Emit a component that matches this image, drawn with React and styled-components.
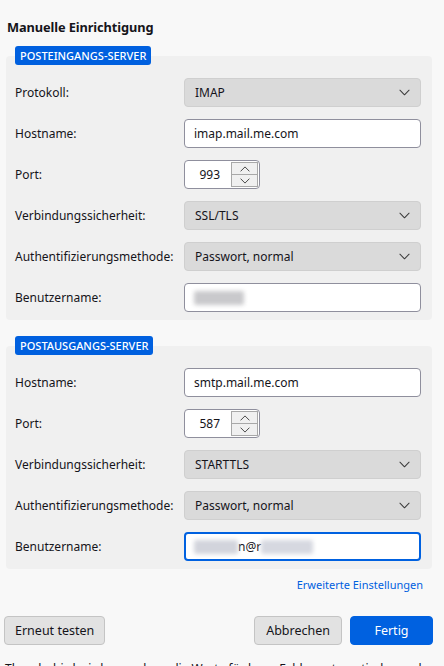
import React from "react";
import styled, { createGlobalStyle } from "styled-components";

const Global = createGlobalStyle`
  html, body { margin: 0; padding: 0; background: #f8f8f8; }
  body {
    font-family: "Noto Sans", "Open Sans", sans-serif;
    color: #15141a;
    overflow: hidden;
  }
`;

const Page = styled.div`
  width: 444px;
  height: 666px;
  box-sizing: border-box;
  padding: 18px 12px 0 6px;
  overflow: hidden;
`;

const Title = styled.h2`
  margin: 0 0 10px 1px;
  font-size: 12.8px;
  font-weight: 700;
  line-height: 18px;
  letter-spacing: -0.1px;
`;

const Section = styled.section`
  margin-bottom: ${(p) => p.$gap || 0}px;
`;

const Badge = styled.div`
  position: relative;
  z-index: 1;
  width: fit-content;
  margin-left: 9px;
  padding: 0 5px;
  height: 19px;
  line-height: 19px;
  border-radius: 3px;
  background: #0060df;
  color: #fff;
  font-size: 11px;
  font-weight: 500;
`;

const Panel = styled.div`
  margin-top: -9px;
  padding: 22px 11px 8px 9px;
  background: #f0f0f0;
  border-radius: 4px;
  display: flex;
  flex-direction: column;
  gap: 12px;
`;

const Row = styled.div`
  display: grid;
  grid-template-columns: 169px 1fr;
  align-items: center;
  height: 29px;
`;

const Label = styled.label`
  font-size: 12px;
  white-space: nowrap;
`;

const SelectBox = styled.div`
  height: 29px;
  box-sizing: border-box;
  display: flex;
  align-items: center;
  justify-content: space-between;
  padding: 0 10px;
  background: #dadada;
  border: 1px solid #cfcfcf;
  border-radius: 4px;
  font-size: 12px;
`;

const TextBox = styled.div`
  height: 29px;
  box-sizing: border-box;
  display: flex;
  align-items: center;
  background: #fff;
  border: ${(p) => (p.$focused ? "2px solid #0061e0" : "1px solid #8f8f9d")};
  padding: 0 ${(p) => (p.$focused ? 8 : 9)}px;
  border-radius: 4px;
  font-size: 12px;
`;

const Spinner = styled.div`
  width: 76px;
  height: 29px;
  box-sizing: border-box;
  display: flex;
  align-items: center;
  background: #fff;
  border: 1px solid #8f8f9d;
  border-radius: 4px;
  font-size: 12px;
`;

const SpinValue = styled.span`
  flex: 1;
  text-align: right;
  padding-right: 11px;
`;

const SpinButtons = styled.div`
  width: 27px;
  height: 25px;
  margin-right: 1px;
  display: flex;
  flex-direction: column;
  border: 1px solid #a8a8a8;
  box-sizing: border-box;
`;

const SpinHalf = styled.div`
  flex: 1;
  display: flex;
  align-items: center;
  justify-content: center;
  background: #f0f0f0;
  & + & { border-top: 1px solid #a8a8a8; }
`;

const Blur = styled.span`
  display: inline-block;
  width: ${(p) => p.$w}px;
  height: 14px;
  background: ${(p) => p.$c || "#c9c9cc"};
  filter: blur(2px);
  border-radius: 2px;
`;

const LinkRow = styled.div`
  display: flex;
  justify-content: flex-end;
  padding: 8px 9px 0 0;
  height: 16px;
  line-height: 16px;
`;

const Link = styled.a`
  color: #0060df;
  font-size: 11px;
  text-decoration: none;
`;

const Buttons = styled.div`
  display: flex;
  align-items: center;
  margin: 23px -1px 0 -2px;
  gap: 8px;
`;

const Button = styled.button`
  height: 29px;
  box-sizing: border-box;
  padding: 0 ${(p) => p.$px || 12}px;
  min-width: ${(p) => p.$min || 0}px;
  font-family: inherit;
  font-size: 12.5px;
  border-radius: 4px;
  border: 1px solid ${(p) => (p.$primary ? "#0061e0" : "#c4c4c4")};
  background: ${(p) => (p.$primary ? "#0061e0" : "#e2e2e2")};
  color: ${(p) => (p.$primary ? "#fff" : "#15141a")};
  &:first-child { margin-right: auto; }
`;

const Note = styled.p`
  margin: 15px 0 0 -1px;
  font-size: 12px;
  white-space: nowrap;
`;

const Chevron = ({ up, size = 11 }) => (
  <svg width={size} height={Math.round(size / 2) + 1} viewBox="0 0 12 7" fill="none">
    <path
      d={up ? "M1 6 L6 1 L11 6" : "M1 1 L6 6 L11 1"}
      stroke="#3a3a3a"
      strokeWidth="1.1"
      strokeLinecap="round"
      strokeLinejoin="round"
    />
  </svg>
);

const Select = ({ value }) => (
  <SelectBox>
    <span>{value}</span>
    <Chevron />
  </SelectBox>
);

const Port = ({ value }) => (
  <Spinner>
    <SpinValue>{value}</SpinValue>
    <SpinButtons>
      <SpinHalf><Chevron up size={10} /></SpinHalf>
      <SpinHalf><Chevron size={10} /></SpinHalf>
    </SpinButtons>
  </Spinner>
);

export default function App() {
  return (
    <Page>
      <Global />
      <Title>Manuelle Einrichtigung</Title>

      <Section $gap={16}>
        <Badge>POSTEINGANGS-SERVER</Badge>
        <Panel>
          <Row>
            <Label>Protokoll:</Label>
            <Select value="IMAP" />
          </Row>
          <Row>
            <Label>Hostname:</Label>
            <TextBox>imap.mail.me.com</TextBox>
          </Row>
          <Row>
            <Label>Port:</Label>
            <div><Port value="993" /></div>
          </Row>
          <Row>
            <Label>Verbindungssicherheit:</Label>
            <Select value="SSL/TLS" />
          </Row>
          <Row>
            <Label>Authentifizierungsmethode:</Label>
            <Select value="Passwort, normal" />
          </Row>
          <Row>
            <Label>Benutzername:</Label>
            <TextBox>
              <Blur $w={50} />
            </TextBox>
          </Row>
        </Panel>
      </Section>

      <Section>
        <Badge>POSTAUSGANGS-SERVER</Badge>
        <Panel>
          <Row>
            <Label>Hostname:</Label>
            <TextBox>smtp.mail.me.com</TextBox>
          </Row>
          <Row>
            <Label>Port:</Label>
            <div><Port value="587" /></div>
          </Row>
          <Row>
            <Label>Verbindungssicherheit:</Label>
            <Select value="STARTTLS" />
          </Row>
          <Row>
            <Label>Authentifizierungsmethode:</Label>
            <Select value="Passwort, normal" />
          </Row>
          <Row>
            <Label>Benutzername:</Label>
            <TextBox $focused>
              <Blur $w={44} $c="#d2d4dc" />
              <span>n@r</span>
              <Blur $w={52} $c="#d6d8e0" />
            </TextBox>
          </Row>
        </Panel>
      </Section>

      <LinkRow>
        <Link href="#">Erweiterte Einstellungen</Link>
      </LinkRow>

      <Buttons>
        <Button $px={10}>Erneut testen</Button>
        <Button $px={11}>Abbrechen</Button>
        <Button $primary $min={83}>Fertig</Button>
      </Buttons>

      <Note>Thunderbird wird versuchen, die Werte für leere Felder automatisch zu erkennen.</Note>
    </Page>
  );
}
